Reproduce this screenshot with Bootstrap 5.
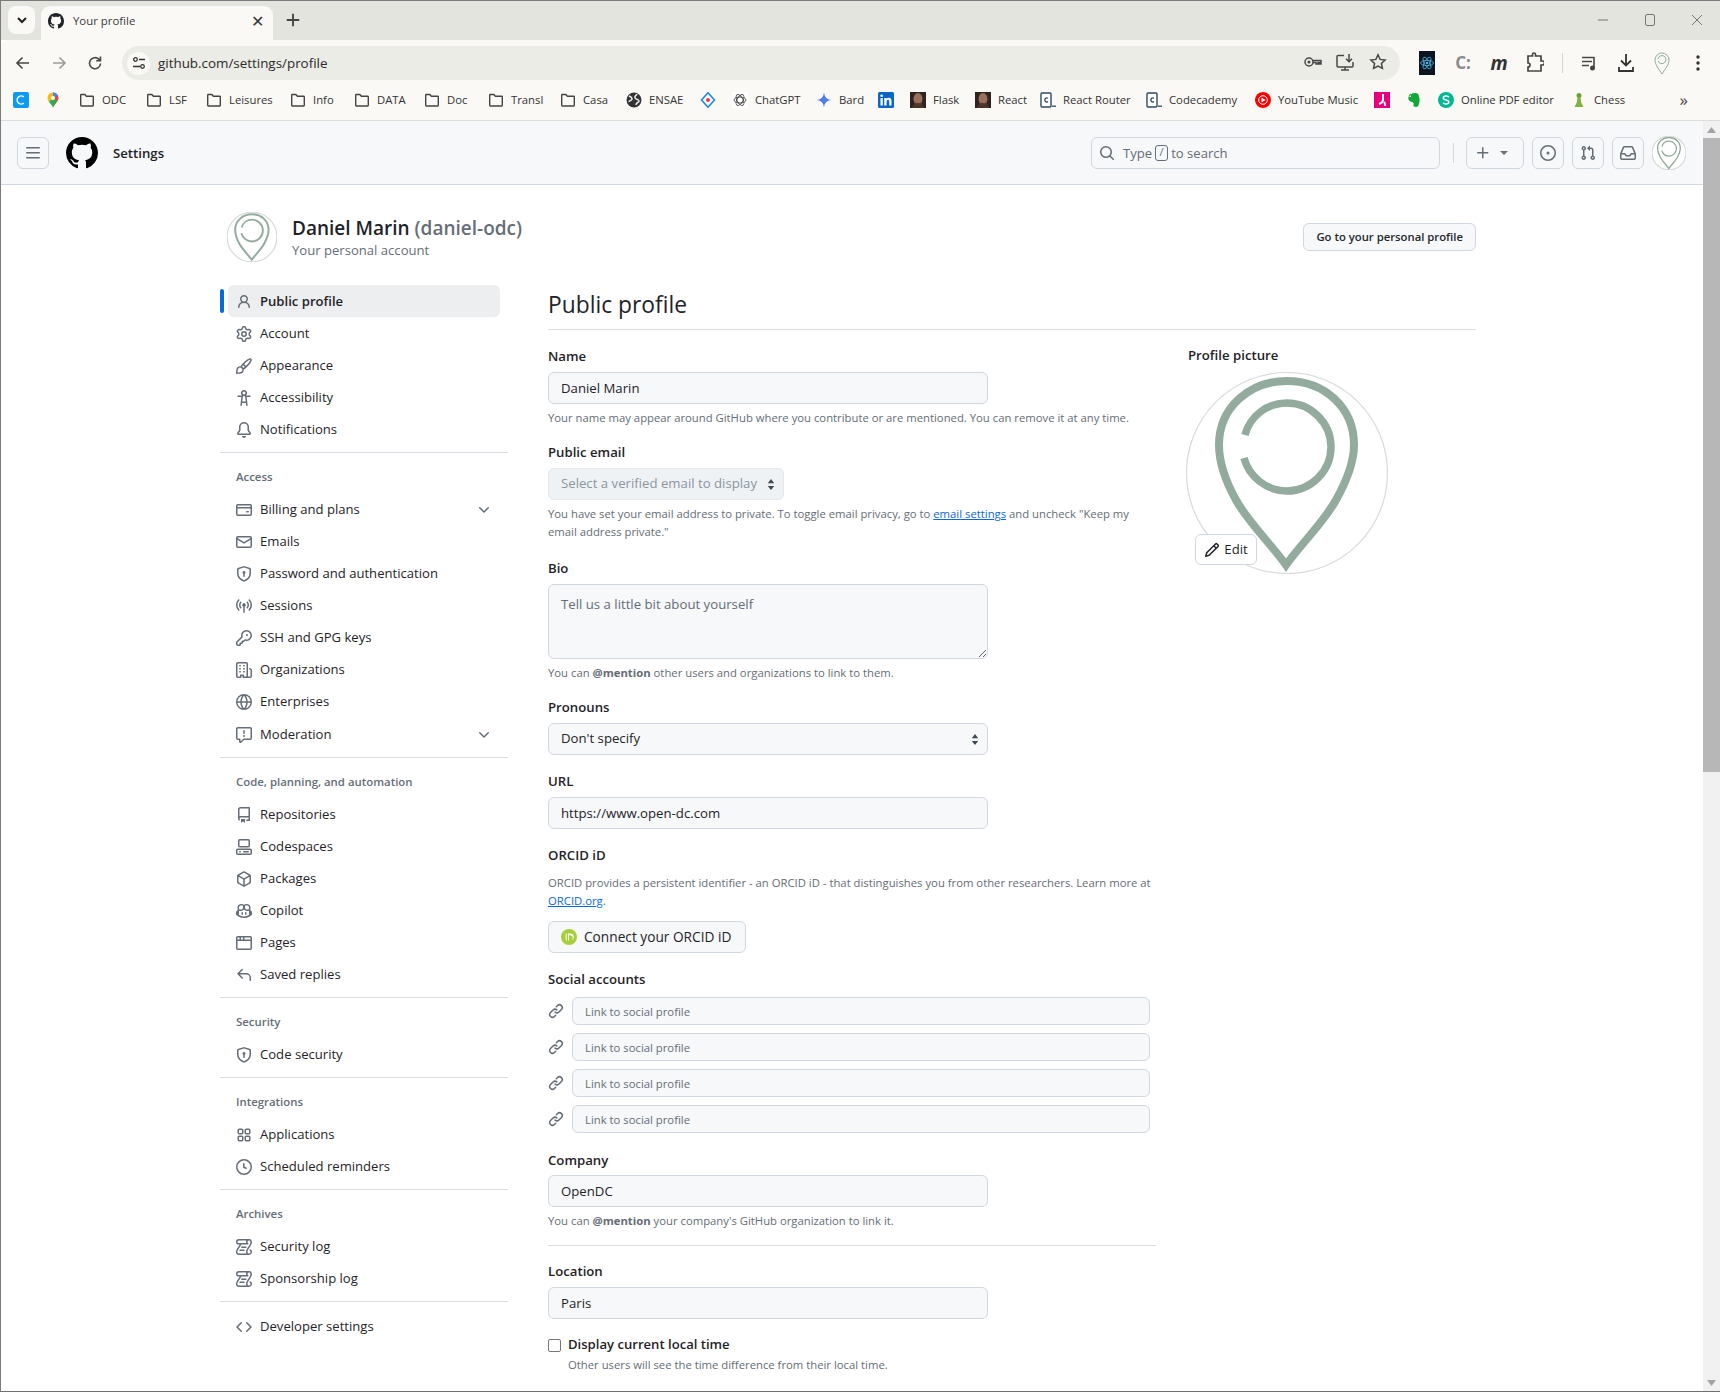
<!DOCTYPE html>
<html lang="en">
<head>
<meta charset="utf-8">
<title>Your profile</title>
<link href="https://cdn.jsdelivr.net/npm/bootstrap@5.3.0/dist/css/bootstrap.min.css" rel="stylesheet">
<style>
html,body{height:1392px;overflow:hidden;margin:0}
body{font-family:"Open Sans","Liberation Sans",sans-serif;font-size:13.1px;color:#1f2328;background:#fff}
.oc{width:16px;height:16px;fill:currentColor;flex:none;display:block}
.frame{height:1392px;border-top:1px solid #7b7b7b;border-left:1px solid #7b7b7b;border-bottom:1px solid #6f6f6f;display:flex;flex-direction:column;overflow:hidden}
/* chrome */
.tabstrip{height:39px;background:#e3e4de;display:flex;align-items:flex-start;padding:5px 0 0 7px;flex:none;color:#3c3c3c}
.tabmenu{width:27px;height:28px;border-radius:8px;background:#faf9f5;display:flex;align-items:center;justify-content:center}
.tabitem{margin-left:6px;width:232px;height:34px;background:#faf9f5;border-radius:9px 9px 0 0;display:flex;align-items:center;padding:0 9px 5px 7px;font-size:11.4px;position:relative}
.tabitem .oc{color:#1f2328;width:16px;height:16px;margin-right:9px}
.tabclose{margin-left:auto;font-size:16px;line-height:1;color:#333}
.tabplus{margin:4px 0 0 10px;width:20px;height:20px;color:#444}
.winbtns{margin-left:auto;display:flex;align-items:center;height:28px;color:#777}
.winbtns span{width:47px;display:flex;justify-content:center}
.toolbar{height:44px;background:#faf9f5;border-top-left-radius:8px;display:flex;align-items:flex-start;padding:6px 0 0 4px;flex:none}
.tbtn{width:36px;height:34px;display:flex;align-items:center;justify-content:center;flex:none;color:#474747}
.tbtn.dim{color:#9a9a96}
.omni{margin:0 9px;width:1278px;height:34px;border-radius:17px;background:#ecece6;display:flex;align-items:center;padding:0 6px 0 5px;flex:none;font-size:13.4px;color:#2a2a2a}
.tune{width:23px;height:23px;border-radius:50%;background:#faf9f5;display:flex;align-items:center;justify-content:center;margin-right:8px}
.omnicons{margin-left:auto;display:flex;margin-right:0;color:#474747}
.omnicons span{width:32.5px;display:flex;justify-content:center}
.tsep{width:1px;height:20px;background:#cfd6cf;margin:7px 9px 0 9px;flex:none}
.extc{font-weight:700;color:#8b8b8b;font-size:17px}
.extm{font-weight:700;font-style:italic;font-size:19px;color:#333}
.bookbar{height:37px;background:#faf9f5;border-bottom:1px solid #dcdcd8;display:flex;align-items:flex-start;padding:8px 0 0 12px;flex:none;font-size:11.3px;color:#333;white-space:nowrap}
.bk{display:flex;align-items:center;gap:7px;height:16px;flex:none}
.bk svg{width:16px;height:16px;flex:none;display:block}
.bw32{width:32px}.bw34{width:34px}.bw60{width:60px}.bw62{width:62px}.bw64{width:64px}.bw65{width:65px}.bw66{width:66px}.bw67{width:67px}.bw70{width:70px}.bw72{width:72px}.bw74{width:74px}.bw84{width:84px}.bw106{width:106px}.bw109{width:109px}.bw119{width:119px}.bw133{width:133px}.bw96{width:96px}
.bkmore{font-size:17px;color:#444;line-height:16px;margin-right:32px}
/* page */
.viewport{flex:1;display:flex;min-height:0}
.pagearea{flex:1;min-width:0;overflow:hidden}
.fakescroll{width:17px;background:#f1f1f1;display:flex;flex-direction:column;flex:none;position:relative}
.sarrow{height:17px;display:flex;align-items:center;justify-content:center;color:#a3a3a3}
.sthumb{height:634px;background:#b7b7b7}
.sspace{flex:1}
.gh-head{height:64px;background:#f6f8fa;border-bottom:1px solid #d0d7de;display:flex;align-items:center;padding:0 17px 0 16px}
.hbtn{width:32px;height:32px;border:1px solid #d0d7de;border-radius:6px;background:transparent;display:flex;align-items:center;justify-content:center;color:#656d76;flex:none}
.hlogo{width:32px;height:32px;margin:0 15px 0 17px;color:#1f2328;flex:none}
.htitle{font-weight:600;font-size:13.2px;padding-top:2px}
.hsearch{margin-left:auto;width:349px;height:32px;border:1px solid #d0d7de;border-radius:6px;display:flex;align-items:center;padding:2px 0 0 7px;color:#656d76}
.hsearch .oc{margin-top:-2px}
.hsearch kbd{background:transparent;color:#656d76;border:1px solid #656d76;border-radius:3px;width:13px;height:16px;display:inline-flex;align-items:center;justify-content:center;padding:0;margin:-2px 3px 0;font-family:inherit;font-size:11px;box-shadow:none}
.hsep{width:1px;height:20px;background:#d0d7de;margin:0 12px 0 13px;flex:none}
.hplus{width:58px;height:32px;border:1px solid #d0d7de;border-radius:6px;display:flex;align-items:center;padding-left:8px;color:#656d76;flex:none}
.hcaret{width:0;height:0;border:4px solid transparent;border-top-color:#656d76;border-bottom:0;margin-left:9px}
.hbtn.mi{margin-left:8px}
.havatar{width:34px;height:34px;margin-left:8px;flex:none}
.shell{width:1256px;margin-left:219px}
.acct{display:flex;justify-content:space-between;padding-top:27px;margin-bottom:23px;height:77px}
.acctname{display:flex;gap:15px;margin-left:7px}
.acctav{width:50px;height:50px;flex:none}
.acct-t{font-size:19px;font-weight:600;line-height:26px;margin-top:3px}
.mut{color:#656d76}
.acct-s{color:#656d76;line-height:20px;margin-top:-1px}
.gotobtn{height:28px;padding:0 12px;margin-top:11px;font-size:11.3px;font-weight:550;color:#24292f;background:#f6f8fa;border:1px solid #d0d7de;border-radius:6px;display:flex;align-items:center;text-decoration:none}
.cols{display:flex;gap:40px}
.sidenav{width:288px;flex:none}
.sitem{height:32px;margin-left:8px;width:272px;padding:1px 8px 0;border-radius:6px;display:flex;align-items:center;gap:8px;color:#1f2328;text-decoration:none;position:relative}
.sitem .oc{color:#656d76}
.sitem.on{background:#eceef0;font-weight:600}
.sitem.on::before{content:"";position:absolute;left:-8px;top:4px;width:4px;height:24px;border-radius:6px;background:#0969da}
.sitem .chev{margin-left:auto}
.lowered{margin-top:1px}
.sdiv{height:1px;background:#d8dee4;margin:7px 0 14px;border:0;opacity:1}
.sdiv.tight{margin-bottom:8px}
.shead{height:20px;line-height:20px;margin:0 0 6px 16px;font-size:11.4px;font-weight:600;color:#656d76}
.content{flex:1;min-width:0}
.ptitle{height:45px;line-height:40px;font-size:22.8px;font-weight:400;border-bottom:1px solid #d8dee4;margin:0}
.formrow{display:flex;gap:32px}
.formcol{width:608px;flex:none;padding-top:16px}
.piccol{padding-top:15px}
.piccol .lbl{margin-bottom:7px}
.lbl{display:block;height:20px;line-height:20px;font-weight:600;font-size:13.2px;margin:0 0 6px}
.gh-input.form-control,.gh-input.form-select{width:440px;height:32px;min-height:0;padding:0 12px;font-size:13.2px;background-color:#f6f8fa;border:1px solid #d0d7de;border-radius:6px;color:#1f2328;box-shadow:none}
.gh-input::placeholder{color:#656d76;opacity:1}
.gh-input.form-select{--bs-form-select-bg-img:url("data:image/svg+xml,%3csvg xmlns='http://www.w3.org/2000/svg' viewBox='0 0 8 12'%3e%3cpath fill='%23424a53' d='M4 0 7.5 4.5h-7zM4 12 .5 7.5h7z'/%3e%3c/svg%3e");background-position:right 8px center;background-size:8px 11px}
.gh-input.form-select:disabled{width:236px;background-color:#eff2f5;color:#8c959f;border-color:#e4e7ea}
textarea.gh-input.form-control{height:75px;padding-top:10px}
.hintx{font-size:11.3px;line-height:18px;color:#656d76;margin-top:5px}
.hintx a,.linky{color:#0969da;text-decoration:underline}
.fblock{margin-bottom:15px}
.fblock.b17{margin-bottom:17px}
.gap16{margin-bottom:16px}
.orcidtxt{font-size:11.3px;line-height:18px;color:#656d76;margin:9px 0 11px}
.orcidbtn{height:32px;width:198px;padding:0 12px;font-size:13.7px;font-weight:500;color:#1f2328;background:#f6f8fa;border:1px solid #d0d7de;border-radius:6px;display:flex;align-items:center;gap:7px}
.orcidbtn svg{width:16px;height:16px;flex:none}
.soclbl{margin-bottom:8px}
.socrow{display:flex;align-items:center;gap:8px;margin-bottom:8px}
.socrow .oc{color:#656d76}
.socrow .form-control.socin{width:578px;height:28px;min-height:0;padding:0 12px;font-size:11.3px;background:#f6f8fa;border:1px solid #d0d7de;border-radius:6px}
.socin::placeholder{color:#656d76;opacity:1}
.socend{height:9px}
.lblt{margin-bottom:5px}
.fline{height:1px;background:#d8dee4;margin:15px 0 15px;border:0;opacity:1}
.chk{display:flex;align-items:center;gap:6px;margin-top:14px;height:20px;font-weight:600;padding:0}
.chk .form-check-input{width:13px;height:13px;margin:0;border:1px solid #767676;border-radius:2px;float:none;flex:none}
.chk label{margin-left:1px}
.hintx.chkhint{margin:-3px 0 0 20px}
.picwrap{position:relative;width:202px;height:202px;margin-left:-2px}
.picwrap>svg{width:202px;height:202px;display:block}
.editbtn{position:absolute;left:9px;top:162px;width:62px;height:31px;background:#fff;border:1px solid #d0d7de;border-radius:6px;display:flex;align-items:center;justify-content:center;gap:4px;font-size:13.1px;font-weight:500;color:#1f2328;padding:0}
</style>
</head>
<body>
<svg class="d-none" xmlns="http://www.w3.org/2000/svg">
<symbol id="i-person" viewBox="0 0 16 16"><path d="M10.561 8.073a6.005 6.005 0 0 1 3.432 5.142.75.75 0 1 1-1.498.07 4.5 4.5 0 0 0-8.99 0 .75.75 0 0 1-1.498-.07 6.004 6.004 0 0 1 3.431-5.142 3.999 3.999 0 1 1 5.123 0ZM10.5 5a2.5 2.5 0 1 0-5 0 2.5 2.5 0 0 0 5 0Z"/></symbol>
<symbol id="i-gear" viewBox="0 0 16 16"><path d="M8 0a8.2 8.2 0 0 1 .701.031C9.444.095 9.99.645 10.16 1.29l.288 1.107c.018.066.079.158.212.224.231.114.454.243.668.386.123.082.233.09.299.071l1.103-.303c.644-.176 1.392.021 1.82.63.27.385.506.792.704 1.218.315.675.111 1.422-.364 1.891l-.814.806c-.049.048-.098.147-.088.294.016.257.016.515 0 .772-.01.147.038.246.088.294l.814.806c.475.469.679 1.216.364 1.891a7.977 7.977 0 0 1-.704 1.217c-.428.61-1.176.807-1.82.63l-1.102-.302c-.067-.019-.177-.011-.3.071a5.909 5.909 0 0 1-.668.386c-.133.066-.194.158-.211.224l-.29 1.106c-.168.646-.715 1.196-1.458 1.26a8.006 8.006 0 0 1-1.402 0c-.743-.064-1.289-.614-1.458-1.26l-.289-1.106c-.018-.066-.079-.158-.212-.224a5.738 5.738 0 0 1-.668-.386c-.123-.082-.233-.09-.299-.071l-1.103.303c-.644.176-1.392-.021-1.82-.63a8.12 8.12 0 0 1-.704-1.218c-.315-.675-.111-1.422.363-1.891l.815-.806c.05-.048.098-.147.088-.294a6.214 6.214 0 0 1 0-.772c.01-.147-.038-.246-.088-.294l-.815-.806C.635 6.045.431 5.298.746 4.623a7.92 7.92 0 0 1 .704-1.217c.428-.61 1.176-.807 1.82-.63l1.102.302c.067.019.177.011.3-.071.214-.143.437-.272.668-.386.133-.066.194-.158.211-.224l.29-1.106C6.009.645 6.556.095 7.299.03 7.53.01 7.764 0 8 0Zm-.571 1.525c-.036.003-.108.036-.137.146l-.289 1.105c-.147.561-.549.967-.998 1.189-.173.086-.34.183-.5.29-.417.278-.97.423-1.529.27l-1.103-.303c-.109-.03-.175.016-.195.045-.22.312-.412.644-.573.99-.014.031-.021.11.059.19l.815.806c.411.406.562.957.53 1.456a4.709 4.709 0 0 0 0 .582c.032.499-.119 1.05-.53 1.456l-.815.806c-.081.08-.073.159-.059.19.162.346.353.677.573.989.02.03.085.076.195.046l1.102-.303c.56-.153 1.113-.008 1.53.27.161.107.328.204.501.29.447.222.85.629.997 1.189l.289 1.105c.029.109.101.143.137.146a6.6 6.6 0 0 0 1.142 0c.036-.003.108-.036.137-.146l.289-1.105c.147-.561.549-.967.998-1.189.173-.086.34-.183.5-.29.417-.278.97-.423 1.529-.27l1.103.303c.109.029.175-.016.195-.045.22-.313.411-.644.573-.99.014-.031.021-.11-.059-.19l-.815-.806c-.411-.406-.562-.957-.53-1.456a4.709 4.709 0 0 0 0-.582c-.032-.499.119-1.05.53-1.456l.815-.806c.081-.08.073-.159.059-.19a6.464 6.464 0 0 0-.573-.989c-.02-.03-.085-.076-.195-.046l-1.102.303c-.56.153-1.113.008-1.53-.27a4.44 4.44 0 0 0-.501-.29c-.447-.222-.85-.629-.997-1.189l-.289-1.105c-.029-.11-.101-.143-.137-.146a6.6 6.6 0 0 0-1.142 0ZM11 8a3 3 0 1 1-6 0 3 3 0 0 1 6 0ZM9.5 8a1.5 1.5 0 1 0-3.001.001A1.5 1.5 0 0 0 9.5 8Z"/></symbol>
<symbol id="i-brush" viewBox="0 0 16 16"><path d="M11.134 1.535c.7-.509 1.416-.942 2.076-1.155.649-.21 1.463-.267 2.069.34.603.601.568 1.411.368 2.07-.202.668-.624 1.39-1.125 2.096-1.011 1.424-2.496 2.987-3.775 4.249-1.098 1.084-2.132 1.839-3.04 2.3a3.744 3.744 0 0 1-1.055 3.217c-.431.431-1.065.691-1.657.861-.614.177-1.294.287-1.914.357A21.151 21.151 0 0 1 .797 16H.743l.007-.75H.749L.742 16a.75.75 0 0 1-.743-.742l.743-.008-.742.007v-.054a21.25 21.25 0 0 1 .13-2.284c.067-.647.187-1.287.358-1.914.17-.591.43-1.226.86-1.657a3.746 3.746 0 0 1 3.227-1.054c.466-.893 1.225-1.907 2.314-2.982 1.271-1.255 2.833-2.75 4.245-3.777ZM1.62 13.089c-.051.464-.086.929-.104 1.395.466-.018.932-.053 1.396-.104a10.511 10.511 0 0 0 1.668-.309c.526-.151.856-.325 1.011-.48a2.25 2.25 0 1 0-3.182-3.182c-.155.155-.329.485-.48 1.01a10.515 10.515 0 0 0-.309 1.67Zm10.396-10.34c-1.224.89-2.605 2.189-3.822 3.384l1.718 1.718c1.21-1.205 2.51-2.597 3.387-3.833.47-.662.78-1.227.912-1.662.134-.444.032-.551.009-.575h-.001V1.78c-.014-.014-.113-.113-.548.027-.432.14-.995.462-1.655.942Zm-4.832 7.266-.001.001a9.859 9.859 0 0 0 1.63-1.142L7.155 7.216a9.7 9.7 0 0 0-1.161 1.607c.482.302.889.71 1.19 1.192Z"/></symbol>
<symbol id="i-access" viewBox="0 0 16 16"><path d="M9.923 5.302c.063.063.122.129.178.198H14A.75.75 0 0 1 14 7h-3.3l.578 5.163.362 2.997a.75.75 0 0 1-1.49.18L9.868 13H6.132l-.282 2.34a.75.75 0 0 1-1.49-.18l.362-2.997L5.3 7H2a.75.75 0 0 1 0-1.5h3.9a2.54 2.54 0 0 1 .176-.198 3 3 0 1 1 3.847 0ZM9.2 7.073h-.001a1.206 1.206 0 0 0-2.398 0L6.305 11.5h3.39ZM9.5 3a1.5 1.5 0 1 0-3.001.001A1.5 1.5 0 0 0 9.5 3Z"/></symbol>
<symbol id="i-bell" viewBox="0 0 16 16"><path d="M8 16a2 2 0 0 0 1.985-1.75c.017-.137-.097-.25-.235-.25h-3.5c-.138 0-.252.113-.235.25A2 2 0 0 0 8 16ZM3 5a5 5 0 0 1 10 0v2.947c0 .05.015.098.042.139l1.703 2.555A1.519 1.519 0 0 1 13.482 13H2.518a1.516 1.516 0 0 1-1.263-2.36l1.703-2.554A.255.255 0 0 0 3 7.947Zm5-3.5A3.5 3.5 0 0 0 4.5 5v2.947c0 .346-.102.683-.294.97l-1.703 2.556a.017.017 0 0 0-.003.01l.001.006c0 .002.002.004.004.006l.006.004.007.001h10.964l.007-.001.006-.004.004-.006.001-.007a.017.017 0 0 0-.003-.01l-1.703-2.554a1.745 1.745 0 0 1-.294-.97V5A3.5 3.5 0 0 0 8 1.5Z"/></symbol>
<symbol id="i-card" viewBox="0 0 16 16"><path d="M10.75 9a.75.75 0 0 0 0 1.5h1.5a.75.75 0 0 0 0-1.5h-1.5Z"/><path d="M0 3.75C0 2.784.784 2 1.75 2h12.5c.966 0 1.75.784 1.75 1.75v8.5A1.75 1.75 0 0 1 14.25 14H1.75A1.75 1.75 0 0 1 0 12.25ZM14.5 6.5h-13v5.75c0 .138.112.25.25.25h12.5a.25.25 0 0 0 .25-.25Zm0-2.75a.25.25 0 0 0-.25-.25H1.75a.25.25 0 0 0-.25.25V5h13Z"/></symbol>
<symbol id="i-mail" viewBox="0 0 16 16"><path d="M1.75 2h12.5c.966 0 1.75.784 1.75 1.75v8.5A1.75 1.75 0 0 1 14.25 14H1.75A1.75 1.75 0 0 1 0 12.25v-8.5C0 2.784.784 2 1.75 2ZM1.5 12.251c0 .138.112.25.25.25h12.5a.25.25 0 0 0 .25-.25V5.809L8.38 9.397a.75.75 0 0 1-.76 0L1.5 5.809v6.442Zm13-8.181v-.32a.25.25 0 0 0-.25-.25H1.75a.25.25 0 0 0-.25.25v.32L8 7.88Z"/></symbol>
<symbol id="i-shield" viewBox="0 0 16 16"><path d="m8.533.133 5.25 1.68A1.75 1.75 0 0 1 15 3.48V7c0 1.566-.32 3.182-1.303 4.682-.983 1.498-2.585 2.813-5.032 3.855a1.697 1.697 0 0 1-1.33 0c-2.447-1.042-4.049-2.357-5.032-3.855C1.32 10.182 1 8.566 1 7V3.48a1.75 1.75 0 0 1 1.217-1.667l5.25-1.68a1.748 1.748 0 0 1 1.066 0Zm-.61 1.429.001.001-5.25 1.68a.251.251 0 0 0-.174.237V7c0 1.36.275 2.666 1.057 3.859.784 1.194 2.121 2.342 4.366 3.298a.196.196 0 0 0 .154 0c2.245-.957 3.582-2.103 4.366-3.297C13.225 9.666 13.5 8.358 13.5 7V3.48a.25.25 0 0 0-.174-.238l-5.25-1.68a.25.25 0 0 0-.153 0ZM9.5 6.5c0 .536-.286 1.032-.75 1.3v2.45a.75.75 0 0 1-1.5 0V7.8A1.5 1.5 0 1 1 9.5 6.5Z"/></symbol>
<symbol id="i-broadcast" viewBox="0 0 16 16"><path d="M8.75 8.582v5.668a.75.75 0 0 1-1.5 0V8.582a1.75 1.75 0 1 1 1.5 0Zm3.983-7.125a.75.75 0 0 1 1.06.026A7.976 7.976 0 0 1 16 7c0 2.139-.84 4.083-2.207 5.517a.75.75 0 1 1-1.086-1.034A6.474 6.474 0 0 0 14.5 7a6.474 6.474 0 0 0-1.793-4.483.75.75 0 0 1 .026-1.06Zm-9.466 0c.3.286.312.76.026 1.06A6.474 6.474 0 0 0 1.5 7a6.47 6.47 0 0 0 1.793 4.483.75.75 0 0 1-1.086 1.034A7.973 7.973 0 0 1 0 7c0-2.139.84-4.083 2.207-5.517a.75.75 0 0 1 1.06-.026Zm8.556 2.321A4.988 4.988 0 0 1 13 7a4.988 4.988 0 0 1-1.177 3.222.75.75 0 1 1-1.146-.967A3.487 3.487 0 0 0 11.5 7c0-.86-.309-1.645-.823-2.255a.75.75 0 0 1 1.146-.967Zm-6.492.958A3.48 3.48 0 0 0 4.5 7a3.48 3.48 0 0 0 .823 2.255.75.75 0 0 1-1.146.967A4.981 4.981 0 0 1 3 7a4.982 4.982 0 0 1 1.188-3.236.75.75 0 1 1 1.143.972Z"/></symbol>
<symbol id="i-key" viewBox="0 0 16 16"><path d="M10.5 0a5.499 5.499 0 1 1-1.288 10.848l-.932.932a.749.749 0 0 1-.53.22H7v.75a.749.749 0 0 1-.22.53l-.5.5a.749.749 0 0 1-.53.22H5v.75a.749.749 0 0 1-.22.53l-.5.5a.749.749 0 0 1-.53.22h-2A1.75 1.75 0 0 1 0 14.25v-2c0-.199.079-.389.22-.53l4.932-4.932A5.5 5.5 0 0 1 10.5 0Zm-4 5.5c-.001.431.069.86.205 1.269a.75.75 0 0 1-.181.768L1.5 12.56v1.69c0 .138.112.25.25.25h1.69l.06-.06v-1.19a.75.75 0 0 1 .75-.75h1.19l.06-.06v-1.19a.75.75 0 0 1 .75-.75h1.19l1.023-1.025a.75.75 0 0 1 .768-.18A4 4 0 1 0 6.5 5.5ZM11 6a1 1 0 1 1 0-2 1 1 0 0 1 0 2Z"/></symbol>
<symbol id="i-org" viewBox="0 0 16 16"><path d="M1.75 16A1.75 1.75 0 0 1 0 14.25V1.75C0 .784.784 0 1.75 0h8.5C11.216 0 12 .784 12 1.75v12.5c0 .085-.006.168-.018.25h2.268a.25.25 0 0 0 .25-.25V8.285a.25.25 0 0 0-.111-.208l-1.055-.703a.749.749 0 1 1 .832-1.248l1.055.703c.487.325.779.871.779 1.456v5.965A1.75 1.75 0 0 1 14.25 16h-3.5a.766.766 0 0 1-.197-.026c-.099.017-.2.026-.303.026h-3a.75.75 0 0 1-.75-.75V14h-1v1.25a.75.75 0 0 1-.75.75Zm-.25-1.75c0 .138.112.25.25.25H4v-1.25a.75.75 0 0 1 .75-.75h2.5a.75.75 0 0 1 .75.75v1.25h2.25a.25.25 0 0 0 .25-.25V1.75a.25.25 0 0 0-.25-.25h-8.5a.25.25 0 0 0-.25.25ZM3.75 6h.5a.75.75 0 0 1 0 1.5h-.5a.75.75 0 0 1 0-1.5ZM3 3.75A.75.75 0 0 1 3.75 3h.5a.75.75 0 0 1 0 1.5h-.5A.75.75 0 0 1 3 3.75Zm4 3A.75.75 0 0 1 7.75 6h.5a.75.75 0 0 1 0 1.5h-.5A.75.75 0 0 1 7 6.75ZM7.75 3h.5a.75.75 0 0 1 0 1.5h-.5a.75.75 0 0 1 0-1.5ZM3 9.75A.75.75 0 0 1 3.75 9h.5a.75.75 0 0 1 0 1.5h-.5A.75.75 0 0 1 3 9.75ZM7.75 9h.5a.75.75 0 0 1 0 1.5h-.5a.75.75 0 0 1 0-1.5Z"/></symbol>
<symbol id="i-globe" viewBox="0 0 16 16"><path d="M8 0a8 8 0 1 1 0 16A8 8 0 0 1 8 0ZM5.78 8.75a9.64 9.64 0 0 0 1.363 4.177c.255.426.542.832.857 1.215.245-.296.551-.705.857-1.215A9.64 9.64 0 0 0 10.22 8.75Zm4.44-1.5a9.64 9.64 0 0 0-1.363-4.177c-.307-.51-.612-.919-.857-1.215a9.927 9.927 0 0 0-.857 1.215A9.64 9.64 0 0 0 5.78 7.25Zm-5.944 1.5H1.543a6.507 6.507 0 0 0 4.666 5.5c-.123-.181-.24-.365-.352-.552-.715-1.192-1.437-2.874-1.581-4.948Zm-2.733-1.5h2.733c.144-2.074.866-3.756 1.58-4.948.12-.197.237-.381.353-.552a6.507 6.507 0 0 0-4.666 5.5Zm10.181 1.5c-.144 2.074-.866 3.756-1.58 4.948-.12.197-.237.381-.353.552a6.507 6.507 0 0 0 4.666-5.5Zm2.733-1.5a6.507 6.507 0 0 0-4.666-5.5c.123.181.24.365.353.552.714 1.192 1.436 2.874 1.58 4.948Z"/></symbol>
<symbol id="i-report" viewBox="0 0 16 16"><path d="M0 1.75C0 .784.784 0 1.75 0h12.5C15.216 0 16 .784 16 1.75v9.5A1.75 1.75 0 0 1 14.25 13H8.06l-2.573 2.573A1.458 1.458 0 0 1 3 14.543V13H1.75A1.75 1.75 0 0 1 0 11.25Zm1.75-.25a.25.25 0 0 0-.25.25v9.5c0 .138.112.25.25.25h2a.75.75 0 0 1 .75.75v2.19l2.72-2.72a.749.749 0 0 1 .53-.22h6.5a.25.25 0 0 0 .25-.25v-9.5a.25.25 0 0 0-.25-.25Zm7 2.25v2.5a.75.75 0 0 1-1.5 0v-2.5a.75.75 0 0 1 1.5 0ZM9 9a1 1 0 1 1-2 0 1 1 0 0 1 2 0Z"/></symbol>
<symbol id="i-repo" viewBox="0 0 16 16"><path d="M2 2.5A2.5 2.5 0 0 1 4.5 0h8.75a.75.75 0 0 1 .75.75v12.5a.75.75 0 0 1-.75.75h-2.5a.75.75 0 0 1 0-1.5h1.75v-2h-8a1 1 0 0 0-.714 1.7.75.75 0 1 1-1.072 1.05A2.495 2.495 0 0 1 2 11.5Zm10.5-1h-8a1 1 0 0 0-1 1v6.708A2.486 2.486 0 0 1 4.5 9h8ZM5 12.25a.25.25 0 0 1 .25-.25h3.5a.25.25 0 0 1 .25.25v3.25a.25.25 0 0 1-.4.2l-1.45-1.087a.249.249 0 0 0-.3 0L5.4 15.7a.25.25 0 0 1-.4-.2Z"/></symbol>
<symbol id="i-codespaces" viewBox="0 0 16 16"><path d="M0 11.25c0-.966.784-1.75 1.75-1.75h12.5c.966 0 1.75.784 1.75 1.75v3A1.75 1.75 0 0 1 14.25 16H1.75A1.75 1.75 0 0 1 0 14.25Zm2-9.5C2 .784 2.784 0 3.75 0h8.5C13.216 0 14 .784 14 1.75v5a1.75 1.75 0 0 1-1.75 1.75h-8.5A1.75 1.75 0 0 1 2 6.75Zm1.75-.25a.25.25 0 0 0-.25.25v5c0 .138.112.25.25.25h8.5a.25.25 0 0 0 .25-.25v-5a.25.25 0 0 0-.25-.25Zm-2 9.5a.25.25 0 0 0-.25.25v3c0 .138.112.25.25.25h12.5a.25.25 0 0 0 .25-.25v-3a.25.25 0 0 0-.25-.25Z"/><path d="M7 12.75a.75.75 0 0 1 .75-.75h4.5a.75.75 0 0 1 0 1.5h-4.5a.75.75 0 0 1-.75-.75Zm-4 0a.75.75 0 0 1 .75-.75h.5a.75.75 0 0 1 0 1.5h-.5a.75.75 0 0 1-.75-.75Z"/></symbol>
<symbol id="i-package" viewBox="0 0 16 16"><path d="m8.878.392 5.25 3.045c.54.314.872.89.872 1.514v6.098a1.75 1.75 0 0 1-.872 1.514l-5.25 3.045a1.75 1.75 0 0 1-1.756 0l-5.25-3.045A1.75 1.75 0 0 1 1 11.049V4.951c0-.624.332-1.201.872-1.514L7.122.392a1.75 1.75 0 0 1 1.756 0ZM7.875 1.69l-4.63 2.685L8 7.133l4.755-2.758-4.63-2.685a.248.248 0 0 0-.25 0ZM2.5 5.677v5.372c0 .09.047.171.125.216l4.625 2.683V8.432Zm6.25 8.271 4.625-2.683a.25.25 0 0 0 .125-.216V5.677L8.75 8.432Z"/></symbol>
<symbol id="i-copilot" viewBox="0 0 16 16"><path d="M7.998 15.035c-4.562 0-7.873-2.914-7.998-3.749V9.338c.085-.628.677-1.686 1.588-2.065.013-.07.024-.143.036-.218.029-.183.06-.384.126-.612-.201-.508-.254-1.084-.254-1.656 0-.87.128-1.769.693-2.484.579-.733 1.494-1.124 2.724-1.261 1.206-.134 2.262.034 2.944.765.05.053.096.108.139.165.044-.057.094-.112.143-.165.682-.731 1.738-.899 2.944-.765 1.23.137 2.145.528 2.724 1.261.566.715.693 1.614.693 2.484 0 .572-.053 1.148-.254 1.656.066.228.098.429.126.612.012.076.024.148.037.218.924.385 1.522 1.471 1.591 2.095v1.872c0 .766-3.351 3.795-8.002 3.795Zm0-1.485c2.28 0 4.584-1.11 5.002-1.433V7.862l-.023-.116c-.49.21-1.075.291-1.727.291-1.146 0-2.059-.327-2.71-.991A3.222 3.222 0 0 1 8 6.303a3.24 3.24 0 0 1-.544.743c-.65.664-1.563.991-2.71.991-.652 0-1.236-.081-1.727-.291l-.023.116v4.255c.419.323 2.722 1.433 5.002 1.433ZM6.762 2.83c-.193-.206-.637-.413-1.682-.297-1.019.113-1.479.404-1.713.7-.247.312-.369.789-.369 1.554 0 .793.129 1.171.308 1.371.162.181.519.379 1.442.379.853 0 1.339-.235 1.638-.54.315-.322.527-.827.617-1.553.117-.935-.037-1.395-.241-1.614Zm4.155-.297c-1.044-.116-1.488.091-1.681.297-.204.219-.359.679-.242 1.614.091.726.303 1.231.618 1.553.299.305.784.54 1.638.54.922 0 1.28-.198 1.442-.379.179-.2.308-.578.308-1.371 0-.765-.123-1.242-.37-1.554-.233-.296-.693-.587-1.713-.7Z"/><path d="M6.25 9.037a.75.75 0 0 1 .75.75v1.501a.75.75 0 0 1-1.5 0V9.787a.75.75 0 0 1 .75-.75Zm4.25.75v1.501a.75.75 0 0 1-1.5 0V9.787a.75.75 0 0 1 1.5 0Z"/></symbol>
<symbol id="i-browser" viewBox="0 0 16 16"><path d="M0 2.75C0 1.784.784 1 1.75 1h12.5c.966 0 1.75.784 1.75 1.75v10.5A1.75 1.75 0 0 1 14.25 15H1.75A1.75 1.75 0 0 1 0 13.25ZM14.5 6h-13v7.25c0 .138.112.25.25.25h12.5a.25.25 0 0 0 .25-.25Zm-6-3.5v2h6v-1.75a.25.25 0 0 0-.25-.25ZM5 2.5v2h2v-2Zm-3.25 0a.25.25 0 0 0-.25.25V4.5h2v-2Z"/></symbol>
<symbol id="i-reply" viewBox="0 0 16 16"><path d="M6.78 1.97a.75.75 0 0 1 0 1.06L3.81 6h6.44A4.75 4.75 0 0 1 15 10.75v2.5a.75.75 0 0 1-1.5 0v-2.5a3.25 3.25 0 0 0-3.25-3.25H3.81l2.97 2.97a.749.749 0 0 1-.326 1.275.749.749 0 0 1-.734-.215L1.47 7.28a.75.75 0 0 1 0-1.06l4.25-4.25a.75.75 0 0 1 1.06 0Z"/></symbol>
<symbol id="i-apps" viewBox="0 0 16 16"><path d="M1.5 3.25c0-.966.784-1.75 1.75-1.75h2.5c.966 0 1.75.784 1.75 1.75v2.5A1.75 1.75 0 0 1 5.75 7.5h-2.5A1.75 1.75 0 0 1 1.5 5.75Zm7 0c0-.966.784-1.75 1.75-1.75h2.5c.966 0 1.75.784 1.75 1.75v2.5a1.75 1.75 0 0 1-1.75 1.75h-2.5A1.75 1.75 0 0 1 8.5 5.75Zm-7 7c0-.966.784-1.75 1.75-1.75h2.5c.966 0 1.75.784 1.75 1.75v2.5a1.75 1.75 0 0 1-1.75 1.75h-2.5a1.75 1.75 0 0 1-1.75-1.75Zm7 0c0-.966.784-1.75 1.75-1.75h2.5c.966 0 1.75.784 1.75 1.75v2.5a1.75 1.75 0 0 1-1.75 1.75h-2.5a1.75 1.75 0 0 1-1.75-1.75ZM3.25 3a.25.25 0 0 0-.25.25v2.5c0 .138.112.25.25.25h2.5A.25.25 0 0 0 6 5.75v-2.5A.25.25 0 0 0 5.75 3Zm7 0a.25.25 0 0 0-.25.25v2.5c0 .138.112.25.25.25h2.5a.25.25 0 0 0 .25-.25v-2.5a.25.25 0 0 0-.25-.25Zm-7 7a.25.25 0 0 0-.25.25v2.5c0 .138.112.25.25.25h2.5a.25.25 0 0 0 .25-.25v-2.5a.25.25 0 0 0-.25-.25Zm7 0a.25.25 0 0 0-.25.25v2.5c0 .138.112.25.25.25h2.5a.25.25 0 0 0 .25-.25v-2.5a.25.25 0 0 0-.25-.25Z"/></symbol>
<symbol id="i-clock" viewBox="0 0 16 16"><path d="M8 0a8 8 0 1 1 0 16A8 8 0 0 1 8 0ZM1.5 8a6.5 6.5 0 1 0 13 0 6.5 6.5 0 0 0-13 0Zm7-3.25v2.992l2.028.812a.75.75 0 0 1-.557 1.392l-2.5-1A.751.751 0 0 1 7 8.25v-3.5a.75.75 0 0 1 1.5 0Z"/></symbol>
<symbol id="i-log" viewBox="0 0 16 16"><path d="M5 8.25a.75.75 0 0 1 .75-.75h4a.75.75 0 0 1 0 1.5h-4A.75.75 0 0 1 5 8.25ZM4 10.5A.75.75 0 0 0 4 12h4a.75.75 0 0 0 0-1.5H4Z"/><path d="M13-.005c1.654 0 3 1.328 3 3 0 .982-.338 1.933-.783 2.818-.443.879-1.028 1.758-1.582 2.588l-.011.017c-.568.853-1.104 1.659-1.501 2.446-.398.789-.623 1.494-.623 2.136a1.5 1.5 0 1 0 2.333-1.248.75.75 0 0 1 .834-1.246A3 3 0 0 1 13 16H3a3 3 0 0 1-3-3c0-1.582.891-3.135 1.777-4.506.209-.322.418-.637.623-.946.473-.709.923-1.386 1.287-2.048H2.51c-.576 0-1.381-.133-1.907-.783A2.68 2.68 0 0 1 0 2.995a3 3 0 0 1 3-3Zm0 1.5a1.5 1.5 0 0 0-1.5 1.5c0 .476.223.834.667 1.132A.75.75 0 0 1 11.75 5.5H5.368c-.467 1.003-1.141 2.015-1.773 2.963-.192.289-.381.571-.558.845C2.13 10.71 1.5 11.916 1.5 13A1.5 1.5 0 0 0 3 14.5h7.401A2.989 2.989 0 0 1 10 13c0-.979.338-1.928.784-2.812.441-.874 1.023-1.748 1.575-2.576l.017-.026c.568-.853 1.103-1.658 1.501-2.448.398-.79.623-1.497.623-2.143 0-.838-.669-1.5-1.5-1.5Zm-10 0a1.5 1.5 0 0 0-1.5 1.5c0 .321.1.569.27.778.097.12.325.227.74.227h7.674A2.737 2.737 0 0 1 10 2.995c0-.546.146-1.059.401-1.5Z"/></symbol>
<symbol id="i-code" viewBox="0 0 16 16"><path d="m11.28 3.22 4.25 4.25a.75.75 0 0 1 0 1.06l-4.25 4.25a.749.749 0 0 1-1.275-.326.749.749 0 0 1 .215-.734L13.94 8l-3.72-3.72a.749.749 0 0 1 .326-1.275.749.749 0 0 1 .734.215Zm-6.56 0a.751.751 0 0 1 1.042.018.751.751 0 0 1 .018 1.042L2.06 8l3.72 3.72a.749.749 0 0 1-.326 1.275.749.749 0 0 1-.734-.215L.47 8.53a.75.75 0 0 1 0-1.06Z"/></symbol>
<symbol id="i-chev" viewBox="0 0 16 16"><path d="M12.78 5.22a.749.749 0 0 1 0 1.06l-4.25 4.25a.749.749 0 0 1-1.06 0L3.22 6.28a.749.749 0 1 1 1.06-1.06L8 8.939l3.72-3.719a.749.749 0 0 1 1.06 0Z"/></symbol>
<symbol id="i-bars" viewBox="0 0 16 16"><path d="M1 2.75A.75.75 0 0 1 1.75 2h12.5a.75.75 0 0 1 0 1.5H1.75A.75.75 0 0 1 1 2.75Zm0 5A.75.75 0 0 1 1.75 7h12.5a.75.75 0 0 1 0 1.5H1.75A.75.75 0 0 1 1 7.75ZM1.75 12h12.5a.75.75 0 0 1 0 1.5H1.75a.75.75 0 0 1 0-1.5Z"/></symbol>
<symbol id="i-mark" viewBox="0 0 16 16"><path d="M8 0c4.42 0 8 3.58 8 8a8.013 8.013 0 0 1-5.45 7.59c-.4.08-.55-.17-.55-.38 0-.27.01-1.13.01-2.2 0-.75-.25-1.23-.54-1.48 1.78-.2 3.65-.88 3.65-3.95 0-.88-.31-1.59-.82-2.15.08-.2.36-1.02-.08-2.12 0 0-.67-.22-2.2.82-.64-.18-1.32-.27-2-.27-.68 0-1.36.09-2 .27-1.53-1.03-2.2-.82-2.2-.82-.44 1.1-.16 1.92-.08 2.12-.51.56-.82 1.28-.82 2.15 0 3.06 1.86 3.75 3.64 3.95-.23.2-.44.55-.51 1.07-.46.21-1.61.55-2.33-.66-.15-.24-.6-.83-1.23-.82-.67.01-.27.38.01.53.34.19.73.9.82 1.13.16.45.68 1.31 2.69.94 0 .67.01 1.3.01 1.49 0 .21-.15.45-.55.38A7.995 7.995 0 0 1 0 8c0-4.42 3.58-8 8-8Z"/></symbol>
<symbol id="i-search" viewBox="0 0 16 16"><path d="M10.68 11.74a6 6 0 0 1-7.922-8.982 6 6 0 0 1 8.982 7.922l3.04 3.04a.749.749 0 0 1-.326 1.275.749.749 0 0 1-.734-.215ZM11.5 7a4.499 4.499 0 1 0-8.997 0A4.499 4.499 0 0 0 11.5 7Z"/></symbol>
<symbol id="i-plus" viewBox="0 0 16 16"><path d="M7.75 2a.75.75 0 0 1 .75.75V7h4.25a.75.75 0 0 1 0 1.5H8.5v4.25a.75.75 0 0 1-1.5 0V8.5H2.75a.75.75 0 0 1 0-1.5H7V2.75A.75.75 0 0 1 7.75 2Z"/></symbol>
<symbol id="i-issue" viewBox="0 0 16 16"><path d="M8 9.5a1.5 1.5 0 1 0 0-3 1.5 1.5 0 0 0 0 3Z"/><path d="M8 0a8 8 0 1 1 0 16A8 8 0 0 1 8 0ZM1.5 8a6.5 6.5 0 1 0 13 0 6.5 6.5 0 0 0-13 0Z"/></symbol>
<symbol id="i-pr" viewBox="0 0 16 16"><path d="M1.5 3.25a2.25 2.25 0 1 1 3 2.122v5.256a2.251 2.251 0 1 1-1.5 0V5.372A2.25 2.25 0 0 1 1.5 3.25Zm5.677-.177L9.573.677A.25.25 0 0 1 10 .854V2.5h1A2.5 2.5 0 0 1 13.5 5v5.628a2.251 2.251 0 1 1-1.5 0V5a1 1 0 0 0-1-1h-1v1.646a.25.25 0 0 1-.427.177L7.177 3.427a.25.25 0 0 1 0-.354ZM3.75 2.5a.75.75 0 1 0 0 1.5.75.75 0 0 0 0-1.5Zm0 9.5a.75.75 0 1 0 0 1.5.75.75 0 0 0 0-1.5Zm8.25.75a.75.75 0 1 0 1.5 0 .75.75 0 0 0-1.5 0Z"/></symbol>
<symbol id="i-inbox" viewBox="0 0 16 16"><path d="M2.8 2.06A1.75 1.75 0 0 1 4.41 1h7.18c.7 0 1.333.417 1.61 1.06l2.74 6.395c.04.093.06.194.06.295v4.5A1.75 1.75 0 0 1 14.25 15H1.75A1.75 1.75 0 0 1 0 13.25v-4.5c0-.101.02-.202.06-.295Zm1.61.44a.25.25 0 0 0-.23.152L1.887 8H4.75a.75.75 0 0 1 .6.3L6.625 10h2.75l1.275-1.7a.75.75 0 0 1 .6-.3h2.863L11.82 2.652a.25.25 0 0 0-.23-.152Zm10.09 7h-2.875l-1.275 1.7a.75.75 0 0 1-.6.3h-3.5a.75.75 0 0 1-.6-.3L4.375 9.5H1.5v3.75c0 .138.112.25.25.25h12.5a.25.25 0 0 0 .25-.25Z"/></symbol>
<symbol id="i-pencil" viewBox="0 0 16 16"><path d="M11.013 1.427a1.75 1.75 0 0 1 2.474 0l1.086 1.086a1.75 1.75 0 0 1 0 2.474l-8.61 8.61c-.21.21-.47.364-.756.445l-3.251.93a.75.75 0 0 1-.927-.928l.929-3.25c.081-.286.235-.547.445-.758l8.61-8.61Zm.176 4.823L9.75 4.81l-6.286 6.287a.253.253 0 0 0-.064.108l-.558 1.953 1.953-.558a.253.253 0 0 0 .108-.064Zm1.238-3.763a.25.25 0 0 0-.354 0L10.811 3.75l1.439 1.44 1.263-1.263a.25.25 0 0 0 0-.354Z"/></symbol>
<symbol id="i-link" viewBox="0 0 16 16"><path d="m7.775 3.275 1.25-1.25a3.5 3.5 0 1 1 4.95 4.95l-2.5 2.5a3.5 3.5 0 0 1-4.95 0 .751.751 0 0 1 .018-1.042.751.751 0 0 1 1.042-.018 1.998 1.998 0 0 0 2.83 0l2.5-2.5a2.002 2.002 0 0 0-2.83-2.83l-1.25 1.25a.751.751 0 0 1-1.042-.018.751.751 0 0 1-.018-1.042Zm-4.69 9.64a1.998 1.998 0 0 0 2.83 0l1.25-1.25a.751.751 0 0 1 1.042.018.751.751 0 0 1 .018 1.042l-1.25 1.25a3.5 3.5 0 1 1-4.95-4.95l2.5-2.5a3.5 3.5 0 0 1 4.95 0 .751.751 0 0 1-.018 1.042.751.751 0 0 1-1.042.018 1.998 1.998 0 0 0-2.83 0l-2.5 2.5a1.998 1.998 0 0 0 0 2.83Z"/></symbol>
<symbol id="i-folder" viewBox="0 0 16 16"><path fill="none" stroke="#444" stroke-width="1.4" d="M1.7 13.3V3.2c0-.4.3-.7.7-.7h3.4l1.6 1.8h6.2c.4 0 .7.3.7.7v8.3c0 .4-.3.7-.7.7H2.4c-.4 0-.7-.3-.7-.7Z"/></symbol>
<symbol id="i-pin" viewBox="0 0 202 202"><circle cx="101" cy="101" r="100.5" fill="#fff" stroke="#d8dbdb" stroke-width="1.2" vector-effect="non-scaling-stroke"/><path fill="none" stroke="#92ab9d" stroke-width="8" d="M100 193C85 172 62 150 50 128 40 110 33 92 33 73 33 35 64 9 101 9s67 26 67 64c0 19-8 37-18 55-12 22-35 44-50 65Z"/><path fill="none" stroke="#92ab9d" stroke-width="7.5" d="M59 63C64 44 81 31 101 31c24 0 44 20 44 44s-20 44-44 44c-20 0-38-14-43-33"/></symbol>
<symbol id="i-face" viewBox="0 0 16 16"><rect width="16" height="16" fill="#2f2420"/><ellipse cx="8" cy="7" rx="4.500" ry="6" fill="#9a6f5c"/><path d="M2 16c.5-3.500 3-5 6-5s5.500 1.500 6 5Z" fill="#4a3329"/><path d="M4.500 9.500c1 2.500 6 2.500 7 0v3h-7Z" fill="#5e3f32"/></symbol>
<symbol id="i-ccc" viewBox="0 0 16 16"><rect x="1" y="1" width="10" height="14" rx="1" fill="#fff" stroke="#2f4a63" stroke-width="1.4"/><path d="M8 6.300a2 2 0 1 0 0 3.200" fill="none" stroke="#2f4a63" stroke-width="1.300"/><path d="M12 14.200h4" stroke="#2f4a63" stroke-width="1.300"/></symbol>
</svg>

<div class="frame">
  <div class="tabstrip">
    <div class="tabmenu"><svg class="oc" viewBox="0 0 16 16"><path d="M4 6l4 4 4-4" fill="none" stroke="#222" stroke-width="2"/></svg></div>
    <div class="tabitem"><svg class="oc"><use href="#i-mark"/></svg>Your profile<span class="tabclose">&#10005;</span></div>
    <svg class="tabplus" viewBox="0 0 16 16"><path d="M8 3v10M3 8h10" stroke="#444" stroke-width="1.500"/></svg>
    <div class="winbtns">
      <span><svg width="12" height="12" viewBox="0 0 12 12"><path d="M1 6h10" stroke="#777"/></svg></span>
      <span><svg width="12" height="12" viewBox="0 0 12 12"><rect x="1.500" y=".5" width="9" height="11" rx="1.500" fill="none" stroke="#777"/></svg></span>
      <span><svg width="12" height="12" viewBox="0 0 12 12"><path d="M1 1l10 10M11 1 1 11" stroke="#777"/></svg></span>
    </div>
  </div>
  <div class="toolbar">
    <div class="tbtn"><svg width="20" height="20" viewBox="0 0 20 20"><path d="M16 10H4.500M9.500 4.500 4 10l5.500 5.500" fill="none" stroke="currentColor" stroke-width="1.600"/></svg></div>
    <div class="tbtn dim"><svg width="20" height="20" viewBox="0 0 20 20"><path d="M4 10h11.500M10.500 4.500 16 10l-5.500 5.500" fill="none" stroke="currentColor" stroke-width="1.600"/></svg></div>
    <div class="tbtn"><svg width="20" height="20" viewBox="0 0 20 20"><path d="M15.500 10.500a5.500 5.500 0 1 1-1.700-4.300l1.700 1.600M15.500 3.500v4.300h-4.300" fill="none" stroke="currentColor" stroke-width="1.600"/></svg></div>
    <div class="omni">
      <span class="tune"><svg width="16" height="16" viewBox="0 0 16 16" fill="none" stroke="#333" stroke-width="1.300"><circle cx="4.500" cy="4.500" r="1.800"/><circle cx="11.500" cy="11.500" r="1.800"/><path d="M8 4.500h6M2 11.500h7"/></svg></span>
      <span>github.com/settings/profile</span>
      <span class="omnicons">
        <span><svg width="20" height="18" viewBox="0 0 20 18" fill="none" stroke="#474747" stroke-width="1.500"><circle cx="6" cy="9" r="4"/><circle cx="6" cy="9" r=".8"/><path d="M10 7.500h8v3.500h-1.500v-1.500H15V11h-2V9.500h-3"/></svg></span>
        <span><svg width="18" height="20" viewBox="0 0 18 20" fill="none" stroke="#474747" stroke-width="1.500"><path d="M8 2.500H2a1 1 0 0 0-1 1V13a1 1 0 0 0 1 1h14a1 1 0 0 0 1-1V9M5 17h8M9 14v3M13 1v7.500M10 5.700 13 8.700l3-3"/></svg></span>
        <span><svg width="18" height="18" viewBox="0 0 18 18" fill="none" stroke="#474747" stroke-width="1.500"><path d="m9 1.800 2.100 4.600 5 .6-3.700 3.400 1 5L9 13l-4.400 2.400 1-5L1.900 7l5-.6Z"/></svg></span>
      </span>
    </div>
    <div class="tbtn"><svg width="16" height="24" viewBox="0 0 16 24"><rect y="0" width="16" height="24" fill="#0d1520"/><g fill="none" stroke="#4db8e8" stroke-width=".8"><ellipse cx="8" cy="12" rx="6.500" ry="2.600"/><ellipse cx="8" cy="12" rx="6.500" ry="2.600" transform="rotate(60 8 12)"/><ellipse cx="8" cy="12" rx="6.500" ry="2.600" transform="rotate(120 8 12)"/></g><circle cx="8" cy="12" r="1.300" fill="#4db8e8"/></svg></div>
    <div class="tbtn extc">C:</div>
    <div class="tbtn extm">m</div>
    <div class="tbtn"><svg width="18" height="22" viewBox="0 0 18 22" fill="none" stroke="#474747" stroke-width="1.700"><path d="M2 4h4.500V2.500a1.500 1.500 0 0 1 3 0V4H15v5h1.500a2 2 0 0 1 0 4H15v6H2v-4a2 2 0 0 0 0-4Z"/></svg></div>
    <div class="tsep"></div>
    <div class="tbtn"><svg width="18" height="18" viewBox="0 0 18 18" fill="none" stroke="#474747" stroke-width="1.600"><path d="M1 3.500h12M1 7.500h10M1 11.500h7M13 3v10.500"/><circle cx="11.500" cy="14" r="1.700" fill="#474747"/></svg></div>
    <div class="tbtn"><svg width="18" height="20" viewBox="0 0 18 20" fill="none" stroke="#333" stroke-width="1.800"><path d="M9 1v11M4 7.500 9 12.500l5-5M2 14v4h14v-4"/></svg></div>
    <div class="tbtn"><svg width="16" height="23" viewBox="0 0 16 23" fill="none" stroke="#92ab9d" stroke-width="1"><path d="M8 22C5 17 1 13 1 8a7 7 0 0 1 14 0c0 5-4 9-7 14Z"/><path d="M4 7a4 4 0 1 1 .2 2"/></svg></div>
    <div class="tbtn"><svg width="4" height="16" viewBox="0 0 4 16" fill="#333"><circle cx="2" cy="2" r="1.700"/><circle cx="2" cy="8" r="1.700"/><circle cx="2" cy="14" r="1.700"/></svg></div>
  </div>
  <div class="bookbar">
    <div class="bk bw32"><svg viewBox="0 0 16 16"><rect width="16" height="16" rx="2" fill="#0c9bef"/><path d="M10.800 5A4 4 0 1 0 10.800 11" fill="none" stroke="#fff" stroke-width="1.500"/></svg></div>
    <div class="bk bw34"><svg viewBox="0 0 16 16"><path d="M8 .5A5.500 5.500 0 0 1 13.500 6c0 3.500-4 6-5.500 9.500z" fill="#ea4335"/><path d="M8 .5A5.500 5.500 0 0 0 2.500 6c0 1.500.6 2.700 1.400 3.800L8 6z" fill="#fbbc04"/><path d="M8 15.500C7 13 5 11.500 3.900 9.800L8 6l4.400 2.500C11 11 9 13 8 15.500z" fill="#34a853"/><path d="M8 .5A5.500 5.500 0 0 1 13 3.500L8 6z" fill="#4285f4"/><circle cx="8" cy="6" r="2" fill="#fff"/></svg></div>
    <div class="bk bw67"><svg><use href="#i-folder"/></svg>ODC</div>
    <div class="bk bw60"><svg><use href="#i-folder"/></svg>LSF</div>
    <div class="bk bw84"><svg><use href="#i-folder"/></svg>Leisures</div>
    <div class="bk bw64"><svg><use href="#i-folder"/></svg>Info</div>
    <div class="bk bw70"><svg><use href="#i-folder"/></svg>DATA</div>
    <div class="bk bw64"><svg><use href="#i-folder"/></svg>Doc</div>
    <div class="bk bw72"><svg><use href="#i-folder"/></svg>Transl</div>
    <div class="bk bw66"><svg><use href="#i-folder"/></svg>Casa</div>
    <div class="bk bw74"><svg viewBox="0 0 16 16"><circle cx="8" cy="8" r="7.500" fill="#333"/><path d="M3 4c2 1 3 1 3 3s-3 1-3 3m8-8c-1 2-3 2-2 4s4 1 4 3-3 1-3 4" fill="none" stroke="#eee" stroke-width="1.500"/></svg>ENSAE</div>
    <div class="bk bw32"><svg viewBox="0 0 16 16"><path d="M8 .8 14.500 8 8 15.200 1.500 8Z" fill="none" stroke="#1e88f0" stroke-width="1.600"/><circle cx="8" cy="8" r="2" fill="#ee3a57"/></svg></div>
    <div class="bk bw84"><svg viewBox="0 0 16 16"><rect width="16" height="16" fill="#fff"/><g fill="none" stroke="#444" stroke-width=".9"><ellipse cx="8" cy="8" rx="6" ry="3"/><ellipse cx="8" cy="8" rx="6" ry="3" transform="rotate(60 8 8)"/><ellipse cx="8" cy="8" rx="6" ry="3" transform="rotate(120 8 8)"/></g></svg>ChatGPT</div>
    <div class="bk bw62"><svg viewBox="0 0 16 16"><path d="M8 .5C8.800 5.500 10.500 7.200 15.500 8 10.500 8.800 8.800 10.500 8 15.500 7.200 10.500 5.500 8.800.5 8 5.500 7.200 7.200 5.500 8 .5Z" fill="#4f7fe0"/></svg>Bard</div>
    <div class="bk bw32"><svg viewBox="0 0 16 16"><rect width="16" height="16" rx="1.500" fill="#0a66c2"/><rect x="2.500" y="6" width="2.300" height="7.500" fill="#fff"/><circle cx="3.650" cy="3.800" r="1.300" fill="#fff"/><path d="M6.300 6h2.200v1c.5-.8 1.300-1.200 2.300-1.200 2 0 2.700 1.300 2.700 3.200v4.500h-2.300V9.500c0-1-.3-1.700-1.200-1.700s-1.400.7-1.400 1.700v4H6.300Z" fill="#fff"/></svg></div>
    <div class="bk bw65"><svg><use href="#i-face"/></svg>Flask</div>
    <div class="bk bw65"><svg><use href="#i-face"/></svg>React</div>
    <div class="bk bw106"><svg><use href="#i-ccc"/></svg>React Router</div>
    <div class="bk bw109"><svg><use href="#i-ccc"/></svg>Codecademy</div>
    <div class="bk bw119"><svg viewBox="0 0 16 16"><circle cx="8" cy="8" r="8" fill="#f00"/><circle cx="8" cy="8" r="4.300" fill="none" stroke="#fff" stroke-width="1"/><path d="M6.500 5.500v5l4-2.500Z" fill="#fff"/></svg>YouTube Music</div>
    <div class="bk bw32"><svg viewBox="0 0 16 16"><rect width="16" height="16" fill="#e6007e"/><path d="M9 2v6c0 2-1 3-4 4m5-2c1 1 1.500 2 1 4" fill="none" stroke="#fff" stroke-width="2"/></svg></div>
    <div class="bk bw32"><svg viewBox="0 0 16 16"><path d="M4 2h2L3 5h2V2c3-1.500 6-1 7 0s2 5 1.500 8-1.500 5-3.500 5-3-1-2.500-2.500 2-.5 2 .5c-2-1-3-3-3-3S4 10 3 8.500 2 5 4 2Z" fill="#14a83a"/></svg></div>
    <div class="bk bw133"><svg viewBox="0 0 16 16"><circle cx="8" cy="8" r="8" fill="#00b894"/><path d="M11 5.300C10.300 4.300 9.300 4 8 4 6.500 4 5.300 4.800 5.300 6s1.200 1.700 2.700 2 2.800.8 2.800 2-1.300 2-2.800 2c-1.300 0-2.400-.4-3-1.400" fill="none" stroke="#fff" stroke-width="1.500"/></svg>Online PDF editor</div>
    <div class="bk bw96"><svg viewBox="0 0 16 16"><circle cx="8" cy="3.500" r="2.500" fill="#6fa038"/><path d="M6.500 5.500h3l.7 5 2.300 4.500H3.500l2.300-4.500Z" fill="#7fb23f"/></svg>Chess</div>
    <div class="bk bkmore ms-auto">&raquo;</div>
  </div>

  <div class="viewport">
    <div class="pagearea">
      <div class="gh-head">
        <div class="hbtn"><svg class="oc"><use href="#i-bars"/></svg></div>
        <svg class="hlogo"><use href="#i-mark"/></svg>
        <span class="htitle">Settings</span>
        <div class="hsearch"><svg class="oc me-2"><use href="#i-search"/></svg>Type<kbd>/</kbd>to search</div>
        <div class="hsep"></div>
        <div class="hplus"><svg class="oc"><use href="#i-plus"/></svg><span class="hcaret"></span></div>
        <div class="hbtn mi"><svg class="oc"><use href="#i-issue"/></svg></div>
        <div class="hbtn mi"><svg class="oc"><use href="#i-pr"/></svg></div>
        <div class="hbtn mi"><svg class="oc"><use href="#i-inbox"/></svg></div>
        <svg class="havatar"><use href="#i-pin"/></svg>
      </div>
      <div class="shell">
        <div class="acct">
          <div class="acctname">
            <svg class="acctav"><use href="#i-pin"/></svg>
            <div>
              <div class="acct-t">Daniel Marin <span class="mut">(daniel-odc)</span></div>
              <div class="acct-s">Your personal account</div>
            </div>
          </div>
          <a class="gotobtn" href="#">Go to your personal profile</a>
        </div>
        <div class="cols">
          <nav class="sidenav">
            <a class="sitem on" href="#"><svg class="oc"><use href="#i-person"/></svg>Public profile</a>
            <a class="sitem" href="#"><svg class="oc"><use href="#i-gear"/></svg>Account</a>
            <a class="sitem" href="#"><svg class="oc"><use href="#i-brush"/></svg>Appearance</a>
            <a class="sitem" href="#"><svg class="oc"><use href="#i-access"/></svg>Accessibility</a>
            <a class="sitem" href="#"><svg class="oc"><use href="#i-bell"/></svg>Notifications</a>
            <hr class="sdiv">
            <div class="shead">Access</div>
            <a class="sitem" href="#"><svg class="oc"><use href="#i-card"/></svg>Billing and plans<svg class="oc chev"><use href="#i-chev"/></svg></a>
            <a class="sitem" href="#"><svg class="oc"><use href="#i-mail"/></svg>Emails</a>
            <a class="sitem" href="#"><svg class="oc"><use href="#i-shield"/></svg>Password and authentication</a>
            <a class="sitem" href="#"><svg class="oc"><use href="#i-broadcast"/></svg>Sessions</a>
            <a class="sitem" href="#"><svg class="oc"><use href="#i-key"/></svg>SSH and GPG keys</a>
            <a class="sitem" href="#"><svg class="oc"><use href="#i-org"/></svg>Organizations</a>
            <a class="sitem" href="#"><svg class="oc"><use href="#i-globe"/></svg>Enterprises</a>
            <a class="sitem lowered" href="#"><svg class="oc"><use href="#i-report"/></svg>Moderation<svg class="oc chev"><use href="#i-chev"/></svg></a>
            <hr class="sdiv">
            <div class="shead">Code, planning, and automation</div>
            <a class="sitem" href="#"><svg class="oc"><use href="#i-repo"/></svg>Repositories</a>
            <a class="sitem" href="#"><svg class="oc"><use href="#i-codespaces"/></svg>Codespaces</a>
            <a class="sitem" href="#"><svg class="oc"><use href="#i-package"/></svg>Packages</a>
            <a class="sitem" href="#"><svg class="oc"><use href="#i-copilot"/></svg>Copilot</a>
            <a class="sitem" href="#"><svg class="oc"><use href="#i-browser"/></svg>Pages</a>
            <a class="sitem" href="#"><svg class="oc"><use href="#i-reply"/></svg>Saved replies</a>
            <hr class="sdiv">
            <div class="shead">Security</div>
            <a class="sitem" href="#"><svg class="oc"><use href="#i-shield"/></svg>Code security</a>
            <hr class="sdiv">
            <div class="shead">Integrations</div>
            <a class="sitem" href="#"><svg class="oc"><use href="#i-apps"/></svg>Applications</a>
            <a class="sitem" href="#"><svg class="oc"><use href="#i-clock"/></svg>Scheduled reminders</a>
            <hr class="sdiv">
            <div class="shead">Archives</div>
            <a class="sitem" href="#"><svg class="oc"><use href="#i-log"/></svg>Security log</a>
            <a class="sitem" href="#"><svg class="oc"><use href="#i-log"/></svg>Sponsorship log</a>
            <hr class="sdiv tight">
            <a class="sitem" href="#"><svg class="oc"><use href="#i-code"/></svg>Developer settings</a>
          </nav>
          <main class="content">
            <h2 class="ptitle">Public profile</h2>
            <div class="formrow">
              <form class="formcol">
                <div class="fblock">
                  <label class="lbl">Name</label>
                  <input class="form-control gh-input" value="Daniel Marin">
                  <div class="hintx">Your name may appear around GitHub where you contribute or are mentioned. You can remove it at any time.</div>
                </div>
                <div class="fblock b17">
                  <label class="lbl">Public email</label>
                  <select class="form-select gh-input" disabled><option>Select a verified email to display</option></select>
                  <div class="hintx">You have set your email address to private. To toggle email privacy, go to <a href="#">email settings</a> and uncheck "Keep my email address private."</div>
                </div>
                <div class="fblock">
                  <label class="lbl">Bio</label>
                  <textarea class="form-control gh-input" placeholder="Tell us a little bit about yourself"></textarea>
                  <div class="hintx">You can <strong>@mention</strong> other users and organizations to link to them.</div>
                </div>
                <div class="gap16">
                  <label class="lbl">Pronouns</label>
                  <select class="form-select gh-input"><option>Don't specify</option></select>
                </div>
                <div class="gap16">
                  <label class="lbl">URL</label>
                  <input class="form-control gh-input" value="https://www.open-dc.com">
                </div>
                <div class="gap16">
                  <label class="lbl">ORCID iD</label>
                  <div class="orcidtxt">ORCID provides a persistent identifier - an ORCID iD - that distinguishes you from other researchers. Learn more at <a class="linky" href="#">ORCID.org</a>.</div>
                  <button type="button" class="orcidbtn"><svg viewBox="0 0 16 16"><circle cx="8" cy="8" r="8" fill="#a6ce39"/><path d="M4.700 4.600h1v6.800h-1zM7 4.600h2.400c2.300 0 3.400 1.500 3.400 3.400s-1.300 3.400-3.400 3.400H7zm1 1v5.800h1.300c1.900 0 2.500-1.300 2.500-2.400 0-1.700-1-2.400-2.500-2.400z" fill="#fff"/></svg>Connect your ORCID iD</button>
                </div>
                <div>
                  <label class="lbl soclbl">Social accounts</label>
                  <div class="socrow"><svg class="oc"><use href="#i-link"/></svg><input class="form-control socin" placeholder="Link to social profile"></div>
                  <div class="socrow"><svg class="oc"><use href="#i-link"/></svg><input class="form-control socin" placeholder="Link to social profile"></div>
                  <div class="socrow"><svg class="oc"><use href="#i-link"/></svg><input class="form-control socin" placeholder="Link to social profile"></div>
                  <div class="socrow"><svg class="oc"><use href="#i-link"/></svg><input class="form-control socin" placeholder="Link to social profile"></div>
                </div>
                <div class="socend"></div>
                <div>
                  <label class="lbl lblt">Company</label>
                  <input class="form-control gh-input" value="OpenDC">
                  <div class="hintx">You can <strong>@mention</strong> your company's GitHub organization to link it.</div>
                </div>
                <hr class="fline">
                <div>
                  <label class="lbl">Location</label>
                  <input class="form-control gh-input" value="Paris">
                  <div class="form-check chk"><input class="form-check-input" type="checkbox"><label>Display current local time</label></div>
                  <div class="hintx chkhint">Other users will see the time difference from their local time.</div>
                </div>
              </form>
              <aside class="piccol">
                <label class="lbl">Profile picture</label>
                <div class="picwrap">
                  <svg><use href="#i-pin"/></svg>
                  <button type="button" class="editbtn"><svg class="oc"><use href="#i-pencil"/></svg>Edit</button>
                </div>
              </aside>
            </div>
          </main>
        </div>
      </div>
    </div>
    <div class="fakescroll">
      <div class="sarrow"><svg width="9" height="6" viewBox="0 0 9 6" fill="currentColor"><path d="M4.500 0 9 6H0z"/></svg></div>
      <div class="sthumb"></div>
      <div class="sspace"></div>
      <div class="sarrow"><svg width="9" height="6" viewBox="0 0 9 6" fill="currentColor"><path d="M4.500 6 9 0H0z"/></svg></div>
    </div>
  </div>
</div>
</body>
</html>
